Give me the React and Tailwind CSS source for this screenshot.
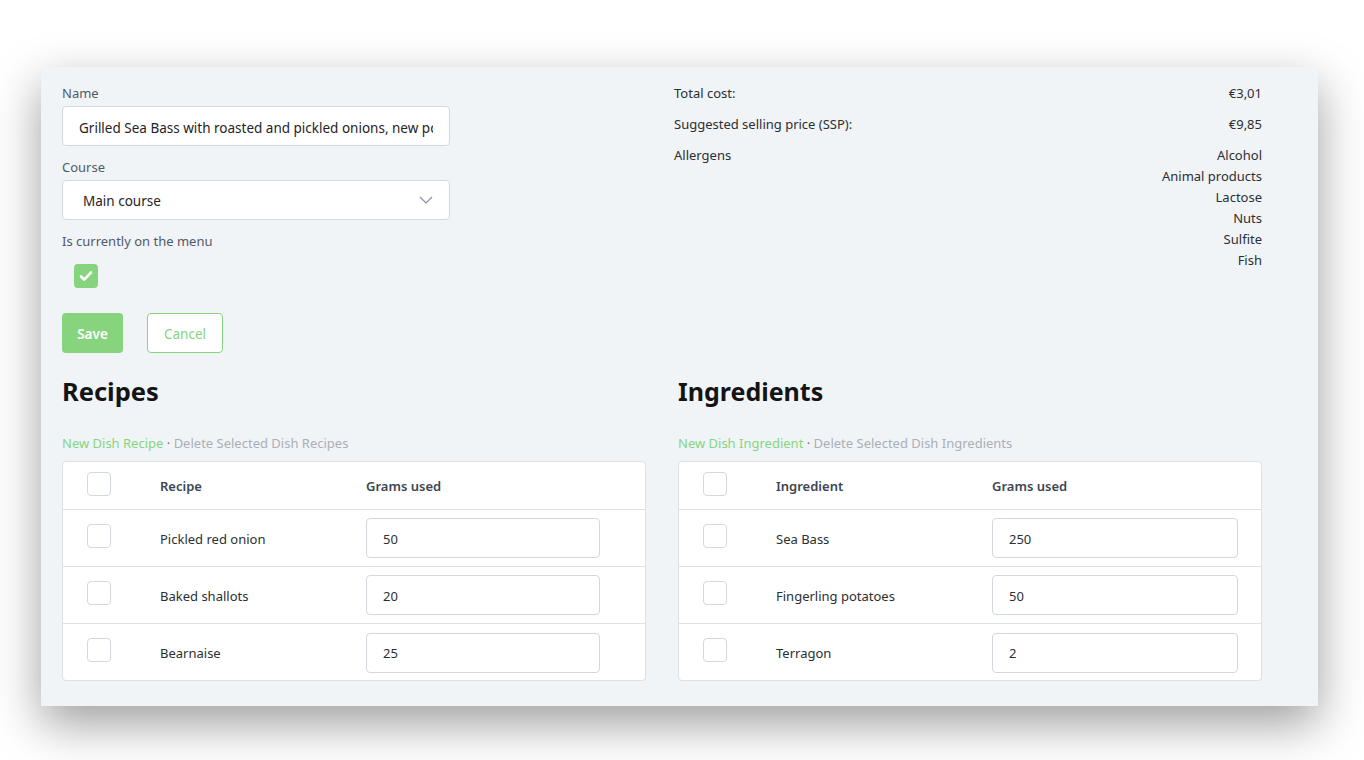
import React from 'react';

const FONT = { fontFamily: '"Noto Sans", "Open Sans", sans-serif' };

const recipes = [
  { name: 'Pickled red onion', grams: '50' },
  { name: 'Baked shallots', grams: '20' },
  { name: 'Bearnaise', grams: '25' },
];

const ingredients = [
  { name: 'Sea Bass', grams: '250' },
  { name: 'Fingerling potatoes', grams: '50' },
  { name: 'Terragon', grams: '2' },
];

const allergens = ['Alcohol', 'Animal products', 'Lactose', 'Nuts', 'Sulfite', 'Fish'];

function Box() {
  return <div className="w-6 h-6 rounded bg-white border border-[#d3d8de]" />;
}

function DishTable({ title, newLabel, deleteLabel, column, rows, cols, titleSize }) {
  return (
    <div>
      <h2 className={`${titleSize} font-bold leading-9 text-[#141414]`}>{title}</h2>
      <div className="mt-[24px] text-[13px] leading-5">
        <span className="text-[#86d47e]">{newLabel}</span>
        <span className="text-[#6b7480]"> · </span>
        <span className="text-[#a9afb7]">{deleteLabel}</span>
      </div>
      <div className="mt-2 bg-white border border-[#dde1e5] rounded">
        <div className={`grid ${cols} items-center h-12 border-b border-[#dde1e5]`}>
          <div className="pl-6 -mt-[4px]"><Box /></div>
          <div className="pt-[2px] text-[13px] font-semibold text-[#3d4651]">{column}</div>
          <div className="pt-[2px] text-[13px] font-semibold text-[#3d4651]">Grams used</div>
        </div>
        {rows.map((r, i) => (
          <div
            key={r.name}
            className={`grid ${cols} items-center ${i < rows.length - 1 ? 'h-[57px] border-b border-[#dde1e5]' : 'h-[56px]'}`}
          >
            <div className="pl-6 -mt-[4px]"><Box /></div>
            <div className="pt-[3px] text-[13px] text-[#2b2f33]">{r.name}</div>
            <div className={i < rows.length - 1 ? '' : 'pt-[1px]'}>
              <div className="h-10 rounded border border-[#d3d8de] bg-white flex items-center pt-[3px] px-4 text-[13px] text-[#2b2f33]">
                {r.grams}
              </div>
            </div>
          </div>
        ))}
      </div>
    </div>
  );
}

export default function App() {
  return (
    <div className="min-h-[760px] bg-white pt-[67px] pl-[41px]" style={FONT}>
      <div className="w-[1277px] h-[639px] bg-[#f1f4f7] shadow-[0_18px_45px_rgba(0,0,0,0.38)] pl-[21px] pr-[56px] pt-4">
        <div className="flex">
          <div className="w-[612px] shrink-0">
            <div className="text-[13px] leading-5 text-[#505a66]">Name</div>
            <input
              readOnly
              value="Grilled Sea Bass with roasted and pickled onions, new potatoes"
              className="block mt-[3px] w-[388px] h-10 rounded border border-[#d3d8de] bg-white pt-[3px] px-4 text-[13.5px] text-[#1f2327] outline-none"
            />
            <div className="mt-[11px] text-[13px] leading-5 text-[#505a66]">Course</div>
            <div className="mt-[3px] w-[388px] h-10 rounded border border-[#d3d8de] bg-white flex items-center justify-between pl-5 pr-4 text-[13.5px] text-[#1f2327]">
              <span className="pt-[3px]">Main course</span>
              <svg width="14" height="8" viewBox="0 0 14 8" fill="none" stroke="#8a929c" strokeWidth="1.2">
                <path d="M1 1l6 6 6-6" />
              </svg>
            </div>
            <div className="mt-[11px] text-[13px] leading-5 text-[#505a66]">Is currently on the menu</div>
            <div className="mt-[13px] ml-3 w-6 h-6 rounded bg-[#86d47e] flex items-center justify-center">
              <svg width="14" height="12" viewBox="0 0 14 12" fill="none" stroke="white" strokeWidth="2.6" strokeLinecap="round" strokeLinejoin="round">
                <path d="M2 6.5l3.2 3.2L12 2.5" />
              </svg>
            </div>
            <div className="mt-[25px] flex gap-6">
              <button className="h-10 w-[61px] rounded bg-[#86d47e] pt-[3px] text-white text-[13.5px] font-semibold">Save</button>
              <button className="h-10 w-[76px] rounded bg-white border border-[#86d47e] pt-[3px] text-[#86d47e] text-[13.5px]">Cancel</button>
            </div>
          </div>
          <div className="flex-1 text-[13px] text-[#2b2f33]">
            <div className="flex justify-between leading-5"><span>Total cost:</span><span>€3,01</span></div>
            <div className="mt-[11px] flex justify-between leading-5"><span>Suggested selling price (SSP):</span><span>€9,85</span></div>
            <div className="mt-[11px] flex justify-between leading-[21px]">
              <span>Allergens</span>
              <div className="flex flex-col items-end">
                {allergens.map((a) => <span key={a}>{a}</span>)}
              </div>
            </div>
          </div>
        </div>
        <div className="mt-[20px] grid grid-cols-2 gap-8">
          <DishTable
            title="Recipes"
            titleSize="text-[25.5px]"
            newLabel="New Dish Recipe"
            deleteLabel="Delete Selected Dish Recipes"
            column="Recipe"
            rows={recipes}
            cols="grid-cols-[97px_206px_234px]"
          />
          <DishTable
            title="Ingredients"
            titleSize="text-[25px]"
            newLabel="New Dish Ingredient"
            deleteLabel="Delete Selected Dish Ingredients"
            column="Ingredient"
            rows={ingredients}
            cols="grid-cols-[97px_216px_246px]"
          />
        </div>
      </div>
    </div>
  );
}
